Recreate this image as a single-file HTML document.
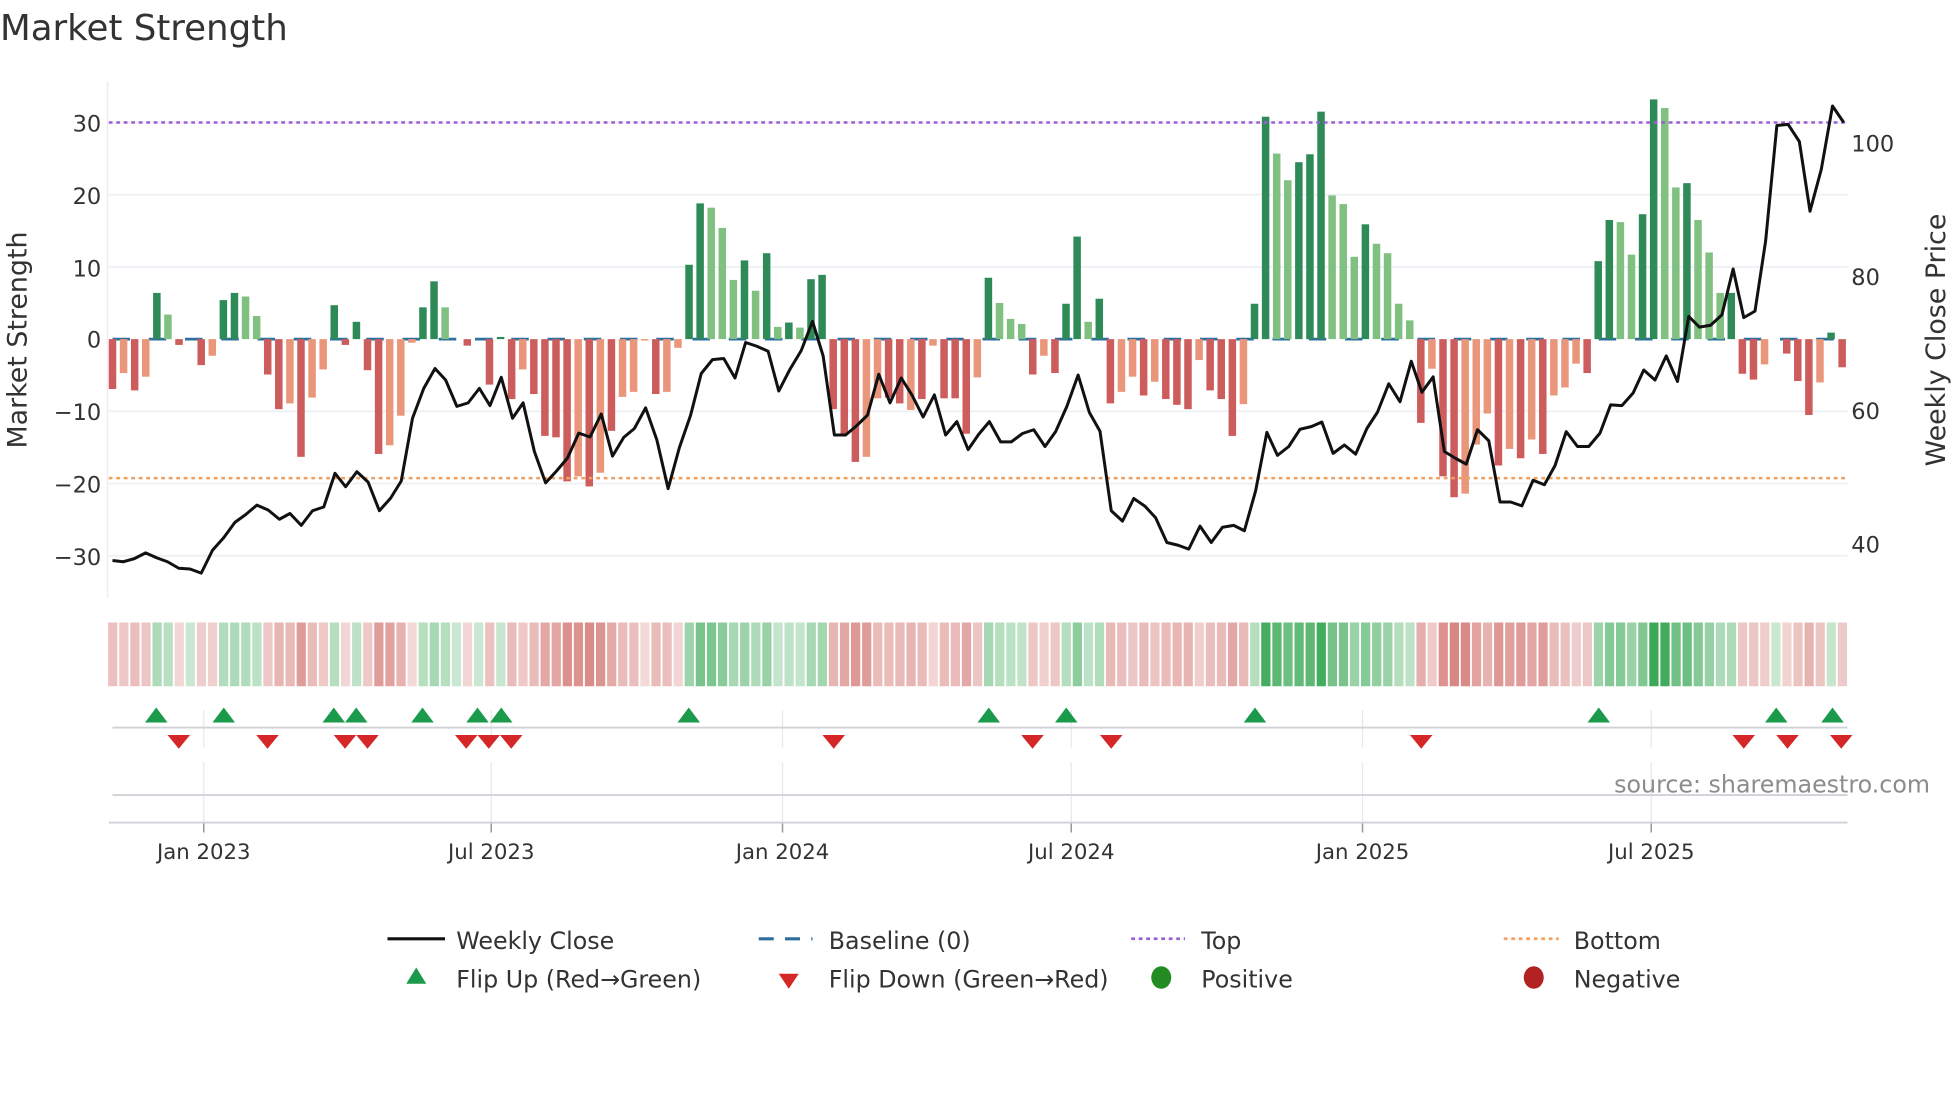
<!DOCTYPE html>
<html><head><meta charset="utf-8"><style>
html,body{margin:0;padding:0;background:#fff;}
svg{display:block;font-family:"DejaVu Sans","Liberation Sans",sans-serif;}
</style></head><body>
<svg id="s" width="1960" height="1102" viewBox="0 0 1568 881.6" xmlns="http://www.w3.org/2000/svg">
<rect width="1568" height="882" fill="#fff"/>
<text x="0" y="32" font-size="28.5" fill="#333">Market Strength</text>
<g id="grid"></g>
<g id="bars"></g>
<g id="strip"></g>
<g id="marks"></g>
<polyline id="price" fill="none" stroke="#111" stroke-width="2.4" stroke-linejoin="round"/>
<g font-size="18" fill="#333" text-anchor="end">
<text x="81" y="105">30</text><text x="81" y="163">20</text><text x="81" y="221">10</text>
<text x="81" y="278">0</text><text x="81" y="336">−10</text><text x="81" y="394">−20</text><text x="81" y="452">−30</text>
</g>
<g font-size="18" fill="#333">
<text x="1481" y="121">100</text><text x="1481" y="228">80</text><text x="1481" y="335">60</text><text x="1481" y="442">40</text>
</g>
<text transform="translate(21,272) rotate(-90)" text-anchor="middle" font-size="21.5" fill="#333">Market Strength</text>
<text transform="translate(1556,272) rotate(-90)" text-anchor="middle" font-size="21.5" fill="#333">Weekly Close Price</text>
<g font-size="17" fill="#333" text-anchor="middle">
<text x="163" y="687">Jan 2023</text><text x="393" y="687">Jul 2023</text><text x="626" y="687">Jan 2024</text>
<text x="857" y="687">Jul 2024</text><text x="1090" y="687">Jan 2025</text><text x="1321" y="687">Jul 2025</text>
</g>
<text x="1544" y="634" text-anchor="end" font-size="19" fill="#8c8c8c">source: sharemaestro.com</text>
<g font-size="19" fill="#333">
<line x1="310" y1="751" x2="356" y2="751" stroke="#111" stroke-width="2.5"/>
<text x="365" y="759">Weekly Close</text>
<line x1="607" y1="751" x2="650" y2="751" stroke="#2e6f9e" stroke-width="2.5" stroke-dasharray="12,9"/>
<text x="663" y="759">Baseline (0)</text>
<line x1="905" y1="751" x2="948" y2="751" stroke="#9b5fd6" stroke-width="2.2" stroke-dasharray="3,3"/>
<text x="961" y="759">Top</text>
<line x1="1203" y1="751" x2="1247" y2="751" stroke="#f0a060" stroke-width="2.2" stroke-dasharray="3,3"/>
<text x="1259" y="759">Bottom</text>
<polygon points="333,774 325,787 341,787" fill="#1a9a4a"/>
<text x="365" y="790">Flip Up (Red→Green)</text>
<polygon points="623,779 639,779 631,791" fill="#d62728"/>
<text x="663" y="790">Flip Down (Green→Red)</text>
<ellipse cx="929" cy="782" rx="8" ry="9" fill="#228b22"/>
<text x="961" y="790">Positive</text>
<ellipse cx="1227" cy="782" rx="8" ry="9" fill="#b22222"/>
<text x="1259" y="790">Negative</text>
</g>
</svg>
<script>
(function(){
var NS="http://www.w3.org/2000/svg";
function el(p,t,a){var e=document.createElementNS(NS,t);for(var k in a)e.setAttribute(k,a[k]);p.appendChild(e);return e;}
var grid=document.getElementById('grid'),bars=document.getElementById('bars'),strip=document.getElementById('strip'),marks=document.getElementById('marks');
var y0=271.3,u=5.777;
for(var v=-30;v<=30;v+=10){if(v==0)continue;el(grid,'line',{x1:87,x2:1478,y1:y0-v*u,y2:y0-v*u,stroke:'#edf0f4','stroke-width':1.5});}
el(grid,'line',{x1:86,x2:86,y1:65,y2:478,stroke:'#eceef2','stroke-width':1.2});
var tx=[163,393,626,857,1090,1321];
tx.forEach(function(x){el(grid,'line',{x1:x,x2:x,y1:568,y2:598,stroke:'#e6e8ef','stroke-width':1});el(grid,'line',{x1:x,x2:x,y1:610,y2:658,stroke:'#e6e8ef','stroke-width':1});el(grid,'line',{x1:x,x2:x,y1:658,y2:666,stroke:'#999','stroke-width':1.2});});
el(grid,'line',{x1:90,x2:1478,y1:582,y2:582,stroke:'#d0d2d8','stroke-width':1.5});
el(grid,'line',{x1:90,x2:1478,y1:636,y2:636,stroke:'#d0d2d8','stroke-width':1.5});
el(grid,'line',{x1:87,x2:1478,y1:658,y2:658,stroke:'#d0d2d8','stroke-width':1.5});
var d="-6.9d -4.7l -7.1d -5.2l 6.4d 3.4l -0.8d 0d -3.6d -2.3l 5.4d 6.4d 5.9l 3.2l -4.9d -9.7d -8.9l -16.3d -8.1l -4.2l 4.7d -0.8d 2.4d -4.3d -15.9d -14.7l -10.6l -0.5l 4.4d 8.0d 4.4l 0d -0.9d 0d -6.3d 0.3d -8.3d -4.2l -7.6d -13.4d -13.6d -19.7d -19.0l -20.4d -18.5l -12.7d -8.0l -7.3l -0.2l -7.6d -7.3l -1.2l 10.3d 18.8d 18.2l 15.4l 8.2l 10.9d 6.7l 11.9d 1.7l 2.3d 1.6l 8.3d 8.9d -9.7d -13.2d -17.0d -16.3l -8.2l -8.1d -8.9d -9.8l -8.3d -0.9l -8.2d -8.2d -13.1d -5.3l 8.5d 5.0l 2.8l 2.1l -4.9d -2.3l -4.7d 4.9d 14.2d 2.4l 5.6d -8.9d -7.3l -5.2l -7.8d -5.9l -8.3d -9.1d -9.7d -2.9l -7.1d -8.3d -13.4d -9.0l 4.9d 30.8d 25.7l 22.0l 24.5d 25.6d 31.5d 19.9l 18.7l 11.4l 15.9d 13.2l 11.9l 4.9l 2.6l -11.6d -4.1l -19.0d -21.9d -21.4l -14.6l -10.3l -17.5d -15.2l -16.5d -13.9l -15.9d -7.8l -6.7l -3.4l -4.7d 10.8d 16.5d 16.2l 11.7l 17.3d 33.2d 32.0l 21.0l 21.6d 16.5l 12.0l 6.4l 6.4d -4.8d -5.6d -3.5l 0d -2.0d -5.8d -10.5d -6.0l 0.9d -3.9d".split(' ');
el(bars,'line',{x1:90,x2:1478,y1:y0,y2:y0,stroke:'#2e6f9e','stroke-width':2.2,'stroke-dasharray':'14,15'});
d.forEach(function(s,i){
 var v=parseFloat(s),t=s.slice(-1),x=90+i*8.87;
 var c=v>=0?(t=='d'?'#2e8b57':'#80c080'):(t=='d'?'#cd5c5c':'#e9967a');
 if(v!=0){var h=Math.abs(v)*u;el(bars,'rect',{x:x-3,y:v>0?y0-h:y0,width:6,height:h,fill:c});}
 var sc,a;
 if(v>=0){a=0.25+0.65*Math.min(v/33,1);sc='rgba(40,160,70,'+a.toFixed(2)+')';}
 else{a=0.2+0.45*Math.min(-v/22,1);sc='rgba(195,70,65,'+a.toFixed(2)+')';}
 el(strip,'rect',{x:86.5+i*8.87,y:498,width:7.4,height:51,fill:sc});
});
el(bars,'line',{x1:87,x2:1478,y1:98,y2:98,stroke:'#9b5fd6','stroke-width':2,'stroke-dasharray':'3,3'});
el(bars,'line',{x1:87,x2:1478,y1:382.5,y2:382.5,stroke:'#f0a060','stroke-width':2,'stroke-dasharray':'3,3'});
var up=[125,179,267,285,338,382,401,551,791,853,1004,1279,1421,1466];
var dn=[143,214,276,294,373,391,409,667,826,889,1137,1395,1430,1473];
up.forEach(function(x){el(marks,'polygon',{points:(x)+',566 '+(x-9)+',578 '+(x+9)+',578',fill:'#1a9a4a'});});
dn.forEach(function(x){el(marks,'polygon',{points:(x-9)+',588 '+(x+9)+',588 '+x+',599',fill:'#d62728'});});
var p1=[180,1465,197,1468,215,1460,233,1445,251,1458,268,1468,286,1485,304,1487,322,1498,340,1438,358,1405,376,1365,393,1345,411,1320,429,1333,447,1357,464,1342,482,1373,500,1335,518,1325,536,1237,553,1272,571,1233,589,1260,607,1335,625,1302,642,1257,660,1093,678,1015,696,963,713,993,731,1062,749,1053,767,1015,784,1060,802,986,820,1093,837,1053,855,1180,873,1262,891,1230,908,1197,926,1132,944,1142,962,1082,980,1192,998,1143,1015,1120,1033,1066,1051,1150,1069,1277,1087,1170,1105,1085,1122,976,1140,940,1158,937,1176,988,1193,895,1211,905,1229,918,1246,1022,1264,965,1282,916,1300,840,1317,930,1335,1137,1353,1137,1371,1112,1388,1085,1406,978,1424,1053,1442,988,1459,1032,1477,1090,1495,1032,1513,1137,1531,1102,1549,1175,1566,1135];
var p2=[15,1102,33,1155,50,1155,68,1133,86,1123,104,1167,121,1128,139,1062,157,980,175,1078,192,1127,210,1335,228,1362,246,1303,264,1323,281,1353,299,1418,317,1425,334,1435,352,1375,370,1418,388,1378,406,1373,423,1387,441,1283,459,1130,476,1190,494,1167,512,1122,530,1115,547,1103,565,1185,583,1163,601,1187,619,1120,636,1077,654,1003,672,1050,690,944,707,1025,725,985,743,1180,761,1198,778,1213,796,1123,814,1152,832,1312,849,1312,867,1322,885,1255,903,1267,920,1217,938,1128,956,1167,974,1167,992,1132,1009,1058,1027,1060,1045,1027,1062,967,1080,993,1098,930,1116,997,1134,827,1151,855,1169,850,1187,823,1205,703,1222,830,1240,813,1257,630,1275,328,1293,325,1311,370,1328,552,1346,443,1364,277,1382,320];
var pts=[];
for(var i=0;i<p1.length;i+=2)pts.push((p1[i]*0.5).toFixed(1)+','+(p1[i+1]*0.3061).toFixed(1));
for(var i=0;i<p2.length;i+=2)pts.push((784+p2[i]*0.5).toFixed(1)+','+(p2[i+1]*0.3061).toFixed(1));
document.getElementById('price').setAttribute('points',pts.join(' '));
})();
</script>
</body></html>
